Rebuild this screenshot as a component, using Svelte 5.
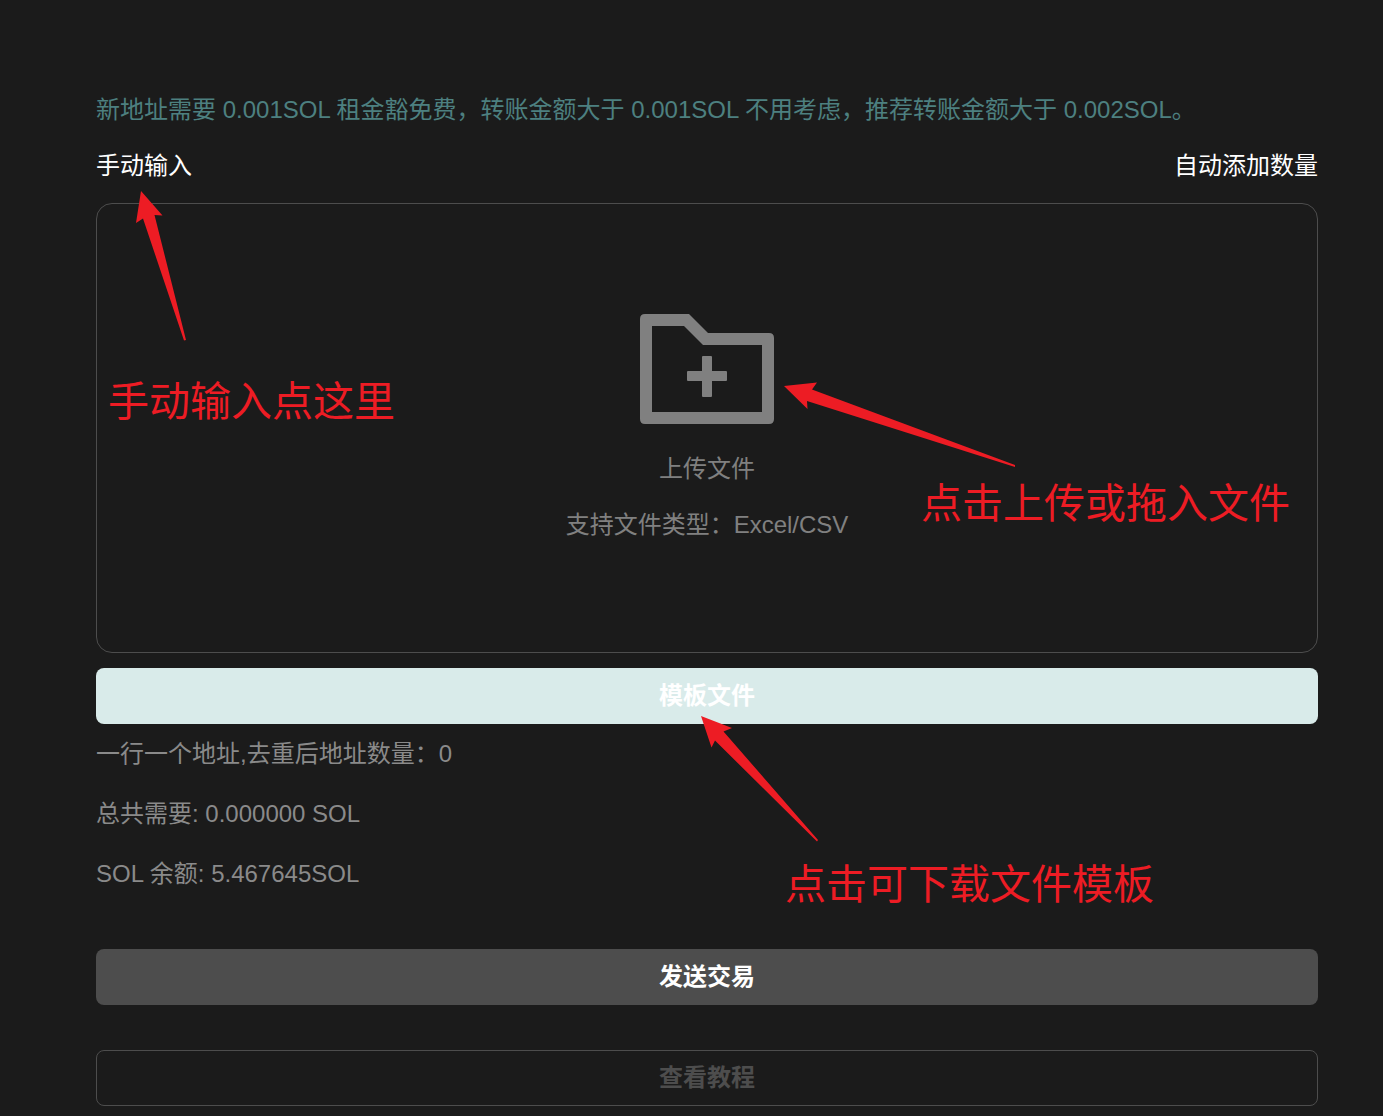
<script>
  let recipients = $state([]);
  let amountPerAddress = $state(0);
  const balance = 5.467645;
  const count = $derived(new Set(recipients).size);
  const total = $derived((count * amountPerAddress).toFixed(6));
</script>

<main class="page">
  <p class="notice">新地址需要 0.001SOL 租金豁免费，转账金额大于 0.001SOL 不用考虑，推荐转账金额大于 0.002SOL。</p>

  <div class="switches">
    <button type="button" class="text-button">手动输入</button>
    <button type="button" class="text-button">自动添加数量</button>
  </div>

  <div class="upload">
    <label class="dropzone">
      <input class="file" type="file" accept=".xls,.xlsx,.csv" />
      <svg class="folder" viewBox="0 0 134 110" aria-hidden="true">
        <path
          fill-rule="evenodd"
          d="M5 0H49L68 19H129Q134 19 134 24V105Q134 110 129 110H5Q0 110 0 105V5Q0 0 5 0ZM12 12V98H122V31H63L44 12Z"
        />
        <path
          d="M63 42H71Q72 42 72 43V57H86Q87 57 87 58V66Q87 67 86 67H72V82Q72 83 71 83H63Q62 83 62 82V67H48Q47 67 47 66V58Q47 57 48 57H62V43Q62 42 63 42Z"
        />
      </svg>
      <span class="hint">上传文件</span>
      <span class="hint">支持文件类型：Excel/CSV</span>
    </label>

    <div class="note note-manual">
      <svg class="arrow" width="51" height="150" viewBox="0 0 51 150" aria-hidden="true">
        <path d="M6 0L27.500 24.500L19.500 24L51 149L49 149.500L8 27.500L1 32Z" />
      </svg>
      <span>手动输入点这里</span>
    </div>

    <div class="note note-upload">
      <svg class="arrow" width="232" height="82" viewBox="0 0 232 82" aria-hidden="true">
        <path d="M0 1L33 -2.500L28 4.500L231 80L231 82L23 16L23.500 24Z" />
      </svg>
      <span>点击上传或拖入文件</span>
    </div>
  </div>

  <div class="template">
    <button type="button" class="action action-template">模板文件</button>
    <div class="note note-template">
      <svg class="arrow" width="118" height="126" viewBox="0 0 118 126" aria-hidden="true">
        <path d="M0 0L31 12L22.500 15.500L117 124L116 125.500L14 24.500L10.500 31.500Z" />
      </svg>
      <span>点击可下载文件模板</span>
    </div>
  </div>

  <div class="summary">
    <p>一行一个地址,去重后地址数量：{count}</p>
    <p>总共需要: {total} SOL</p>
    <p>SOL 余额: {balance}SOL</p>
  </div>

  <div class="actions">
    <button type="button" class="action action-send">发送交易</button>
    <button type="button" class="action action-guide">查看教程</button>
  </div>
</main>

<style>
  :global(body) {
    background: #1b1b1b;
  }

  .page {
    box-sizing: border-box;
    padding: 92px 65px 10px 96px;
    color: #8a8a8a;
    font-family: "Liberation Sans", "Noto Sans CJK SC", sans-serif;
    font-size: 24px;
    line-height: 36px;
  }

  p {
    margin: 0;
  }

  button {
    margin: 0;
    border: 0;
    font: inherit;
    cursor: pointer;
  }

  .notice {
    color: #4d8080;
  }

  .switches {
    display: flex;
    justify-content: space-between;
    margin: 20px 0 19px;
  }

  .text-button {
    padding: 0;
    background: none;
    color: #fff;
  }

  .upload,
  .template {
    position: relative;
  }

  .dropzone {
    box-sizing: border-box;
    display: flex;
    flex-direction: column;
    align-items: center;
    gap: 20px;
    min-height: 450px;
    padding: 110px 24px 100px;
    border: 1px solid #4d4d4d;
    border-radius: 16px;
    color: #808080;
    cursor: pointer;
  }

  .file {
    position: absolute;
    width: 1px;
    height: 1px;
    opacity: 0;
  }

  .folder {
    width: 134px;
    height: 110px;
    margin-bottom: 7px;
    fill: #808080;
  }

  .note {
    position: absolute;
    color: #ed1c24;
    font-size: 41px;
    line-height: 48px;
    white-space: nowrap;
    pointer-events: none;
  }

  .note span {
    position: absolute;
  }

  .arrow {
    display: block;
    overflow: visible;
    fill: #ed1c24;
  }

  .note-manual {
    top: -12px;
    left: 39px;
  }

  .note-manual span {
    top: 187px;
    left: -27px;
  }

  .note-upload {
    top: 182px;
    left: 50%;
    margin-left: 77px;
  }

  .note-upload span {
    top: 95px;
    left: 137px;
  }

  .template {
    margin-top: 15px;
  }

  .note-template {
    top: 48px;
    left: 50%;
    margin-left: -6px;
  }

  .note-template span {
    top: 145px;
    left: 84px;
  }

  .action {
    display: block;
    width: 100%;
    min-height: 56px;
    padding: 8px;
    border-radius: 8px;
    font-weight: 700;
  }

  .action-template {
    background: #d9ebea;
    color: #fff;
  }

  .action-send {
    background: #4d4d4d;
    color: #fff;
  }

  .action-guide {
    border: 1px solid #4d4d4d;
    background: none;
    color: #4d4d4d;
  }

  .summary {
    display: grid;
    gap: 24px;
    margin-top: 12px;
  }

  .actions {
    display: grid;
    gap: 45px;
    margin-top: 57px;
  }
</style>
